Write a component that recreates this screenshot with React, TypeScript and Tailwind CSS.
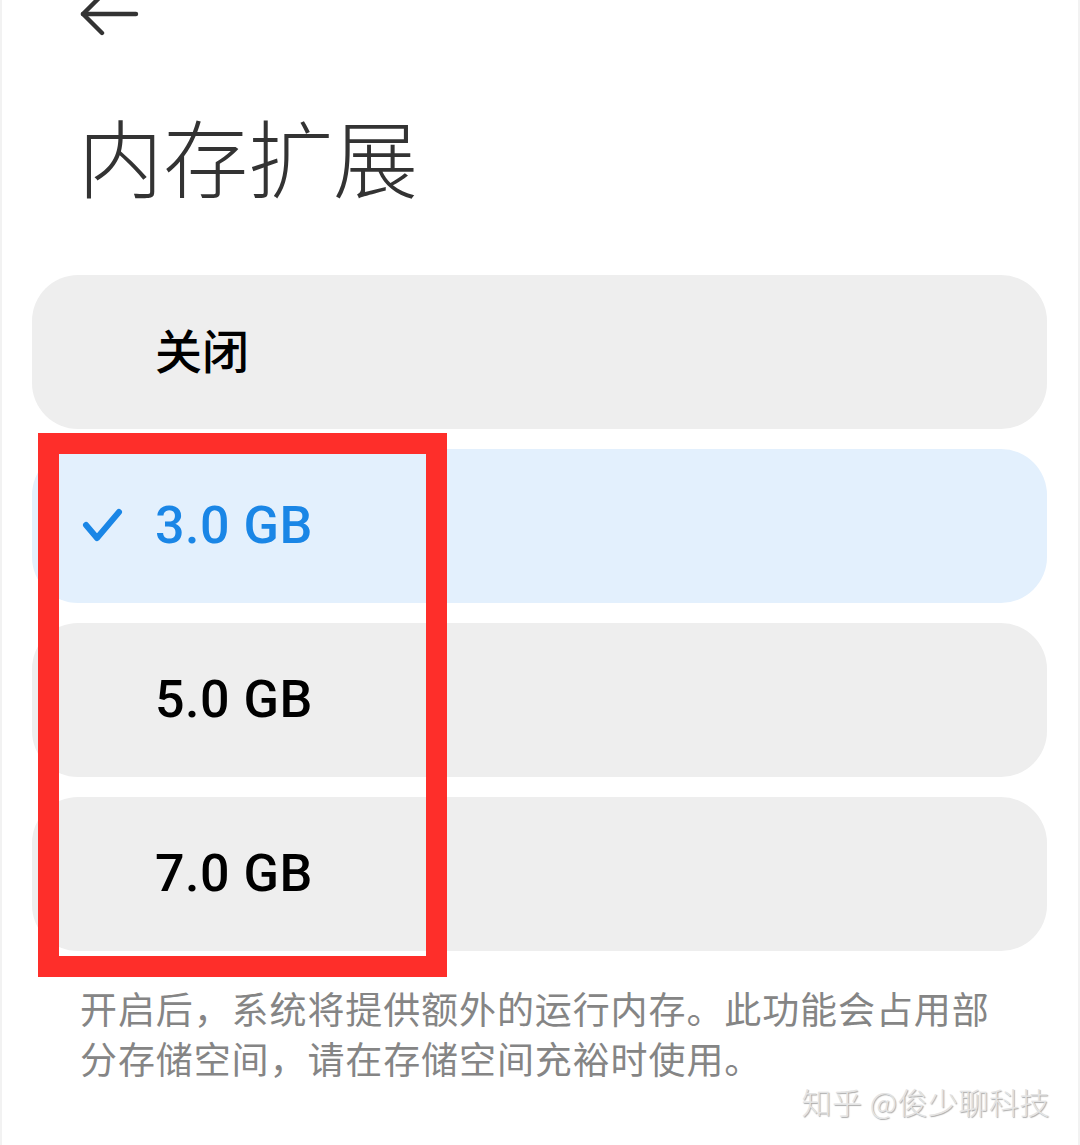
interface OptionProps {
  label: string;
  selected?: boolean;
  latin?: boolean;
}

const options: OptionProps[] = [
  { label: "关闭" },
  { label: "3.0 GB", selected: true, latin: true },
  { label: "5.0 GB", latin: true },
  { label: "7.0 GB", latin: true },
];

const font = "font-['Roboto','Noto_Sans_CJK_SC',sans-serif]";

const BackArrow = () => (
  <svg width="60" height="36" viewBox="0 0 60 36" fill="none" stroke="#333" strokeWidth="4.4" strokeLinecap="round" strokeLinejoin="round">
    <path d="M4 14 H57" />
    <path d="M23 -5 L4 14 L23 33" />
  </svg>
);

const CheckMark = () => (
  <svg width="42" height="38" viewBox="0 0 42 38" fill="none" stroke="#1a86e6" strokeWidth="6" strokeLinecap="round" strokeLinejoin="round">
    <path d="M4 18 L15 31 L37 5" />
  </svg>
);

export default function App() {
  return (
    <div className={`relative w-[1080px] h-[1145px] overflow-hidden bg-white border-x-2 border-[#f2f2f2] ${font}`}>
      <div className="pl-[77px] h-[36px]">
        <BackArrow />
      </div>

      <h1 className="mt-[77px] pl-[76px] text-[85px] leading-[84px] font-light text-[#333] font-['Noto_Sans_CJK_SC',sans-serif]">
        内存扩展
      </h1>

      <div className="mt-[78px] ml-[30px] mr-[31px] flex flex-col gap-[20px]">
        {options.map(({ label, selected, latin }) => (
          <div
            key={label}
            className={`h-[154px] rounded-[46px] flex items-center pl-[50px] ${selected ? "bg-[#e3f0fd]" : "bg-[#eeeeee]"}`}
          >
            <div className="w-[73px] flex items-center">{selected && <CheckMark />}</div>
            <span
              className={`${latin ? "text-[52px] tracking-[0.5px]" : "text-[47px]"} font-medium leading-none ${selected ? "text-[#1a86e6]" : "text-black"}`}
            >
              {label}
            </span>
          </div>
        ))}
      </div>

      <p className="mt-[32px] pl-[78px] text-[37px] leading-[50px] tracking-[0.9px] text-[#858585] font-['Noto_Sans_CJK_SC',sans-serif]">
        开启后，系统将提供额外的运行内存。此功能会占用部
        <br />
        分存储空间，请在存储空间充裕时使用。
      </p>

      <div className="flex justify-end pr-[28px] text-[30px] leading-[36px] tracking-[0.5px] font-light text-[#e4e4e4] [text-shadow:1px_1px_1px_#aaaaaa] font-['Noto_Sans_CJK_SC',sans-serif]">
        知乎 @俊少聊科技
      </div>

      <div className="absolute left-[36px] top-[433px] w-[409px] h-[544px] border-[21px] border-[#fe2e2a]" />
    </div>
  );
}
